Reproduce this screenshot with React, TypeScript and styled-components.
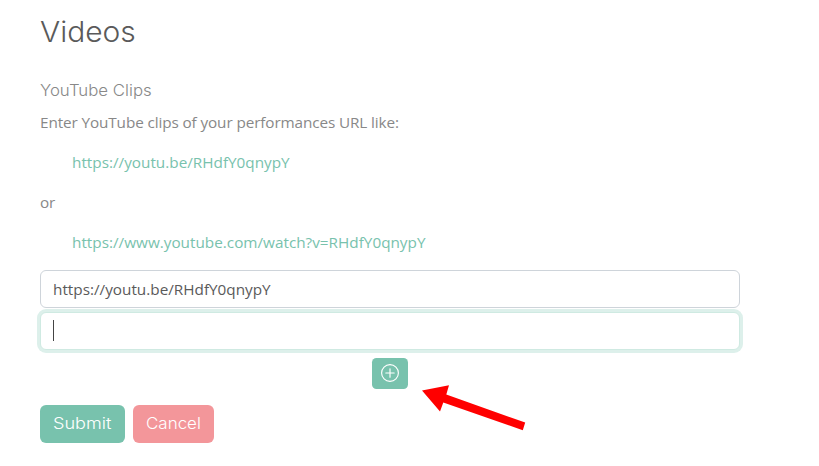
import React from 'react';
import styled, { createGlobalStyle } from 'styled-components';

const GlobalStyle = createGlobalStyle`
  *, *::before, *::after { box-sizing: border-box; }
  body {
    margin: 0;
    background: #fff;
    color: #888;
    font: 400 15.3px/24px "Open Sans", sans-serif;
    overflow: hidden;
  }
`;

const Page = styled.main`
  position: relative;
  width: 819px;
  height: 466px;
  padding: 15px 40px 0;
`;

/* Widened lettering for headings and buttons. */
const Wide = styled.span<{ $x: number }>`
  display: inline-block;
  transform: scaleX(${p => p.$x});
  transform-origin: left center;
`;

const Title = styled.h1`
  margin: 0 0 29px;
  color: #5a5a5a;
  font: 330 28px/34px Inter, sans-serif;
`;

const Subtitle = styled.h2`
  margin: 0 0 8px;
  color: #888;
  font: 330 16px/24px Inter, sans-serif;
`;

const Paragraph = styled.p`
  margin: 0 0 16px;
  letter-spacing: -0.11px;
`;

const Example = styled.div`
  margin: 0 0 16px;
  padding-left: 32px;
`;

const Link = styled.a`
  color: #78c2ad;
  text-decoration: none;
`;

const Fields = styled.div`
  display: flex;
  flex-direction: column;
  align-items: center;
  width: 700px;
`;

const Field = styled.div<{ $focused?: boolean }>`
  display: flex;
  align-items: center;
  width: 100%;
  height: 38px;
  margin-bottom: 4px;
  padding: 0 12px;
  border: 1px solid ${p => (p.$focused ? '#cfeae2' : '#ced4da')};
  border-radius: 6px;
  background: #fff;
  box-shadow: ${p => (p.$focused ? '0 0 0 3px #ddf0eb' : 'none')};
  color: #5a5a5a;
`;

const Caret = styled.span`
  width: 1px;
  height: 21px;
  margin-top: -2px;
  background: #444;
`;

const AddButton = styled.button`
  display: grid;
  place-items: center;
  width: 36px;
  height: 31px;
  margin: 4px 0 16px;
  padding: 0 0 1px;
  border: 0;
  border-radius: 4.5px;
  background: #78c2ad;
`;

const Actions = styled.div`
  display: flex;
  gap: 8px;
`;

const ActionButton = styled.button<{ $danger?: boolean }>`
  width: ${p => (p.$danger ? 81 : 85)}px;
  height: 38px;
  padding: 0 0 2px 12.5px;
  border: 0;
  border-radius: 6px;
  background: ${p => (p.$danger ? '#f3969a' : '#78c2ad')};
  color: #fff;
  font: 330 16px/24px Inter, sans-serif;
  text-align: left;
`;

const Pointer = styled.svg`
  position: absolute;
  left: 420px;
  top: 382px;
`;

export default function App() {
  return (
    <Page>
      <GlobalStyle />
      <Title><Wide $x={1.07}>Videos</Wide></Title>
      <Subtitle><Wide $x={1.05}>YouTube Clips</Wide></Subtitle>
      <Paragraph>Enter YouTube clips of your performances URL like:</Paragraph>
      <Example><Link>https://youtu.be/RHdfY0qnypY</Link></Example>
      <Paragraph>or</Paragraph>
      <Example><Link>https://www.youtube.com/watch?v=RHdfY0qnypY</Link></Example>
      <Fields>
        <Field>https://youtu.be/RHdfY0qnypY</Field>
        <Field $focused><Caret /></Field>
        <AddButton aria-label="Add clip">
          <svg width="18" height="18" viewBox="0 0 18 18" fill="none" stroke="#fff" strokeWidth="1.15" strokeLinecap="round">
            <circle cx="9" cy="9" r="8.4" />
            <path d="M9 4.8v8.4M4.8 9h8.4" />
          </svg>
        </AddButton>
      </Fields>
      <Actions>
        <ActionButton><Wide $x={1.13}>Submit</Wide></ActionButton>
        <ActionButton $danger><Wide $x={1.06}>Cancel</Wide></ActionButton>
      </Actions>
      <Pointer width="108" height="52" viewBox="420 382 108 52">
        <path d="M422 390.5 449 385.2 446.3 394.6 525.2 422.6 522.8 430.2 443.3 402.5 440 411.5Z" fill="#f00" />
      </Pointer>
    </Page>
  );
}
